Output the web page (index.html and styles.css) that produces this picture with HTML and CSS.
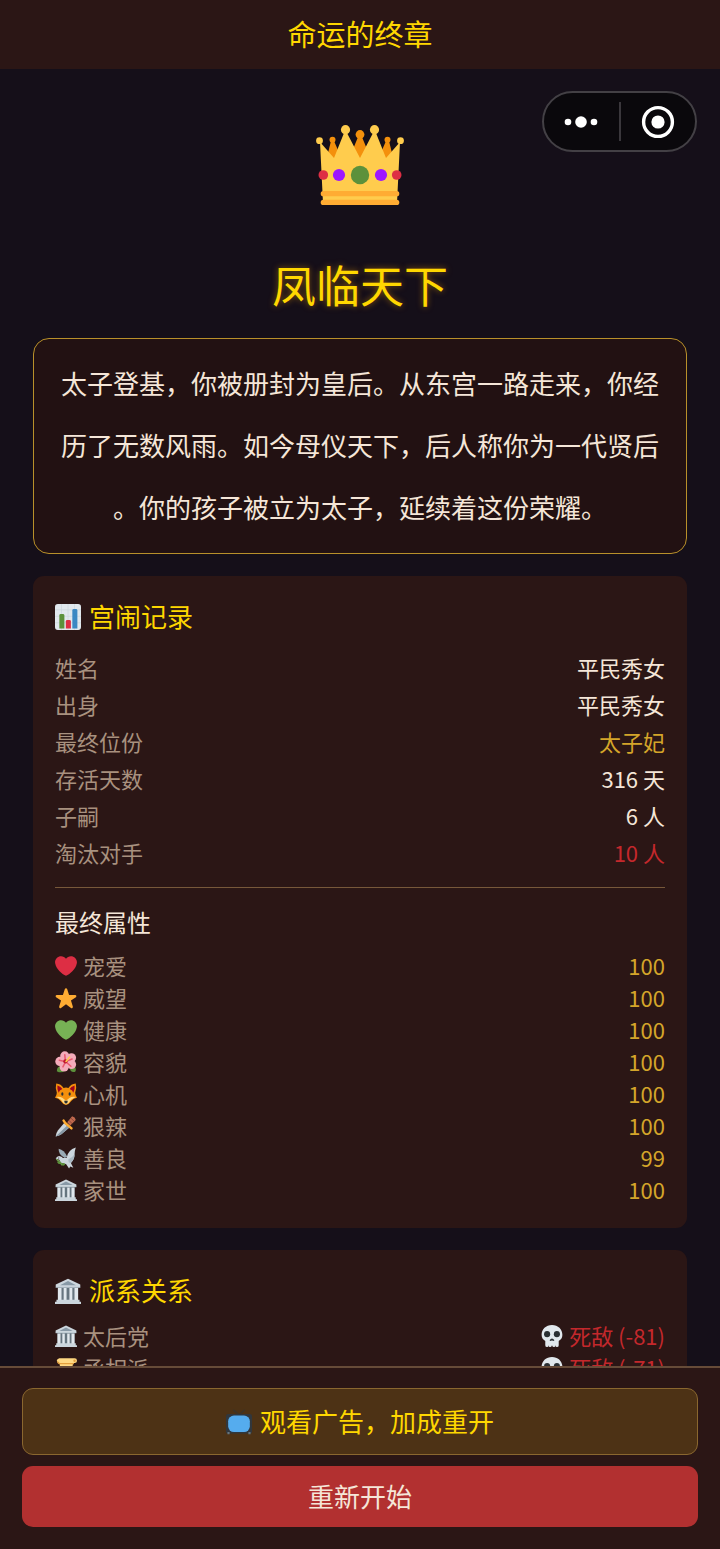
FILE: index.html
```html
<!DOCTYPE html>
<html lang="zh-CN">

<head>
    <meta charset="UTF-8">
    <meta name="viewport" content="width=device-width, initial-scale=1.0">
    <title>命运的终章</title>
    <link rel="stylesheet" href="styles.css">
</head>

<body>
    <!-- icon sprite -->
    <svg class="sprite" aria-hidden="true">
        <symbol id="chart" viewBox="0 0 36 36">
            <rect width="36" height="36" rx="4" fill="#e1e8ed" />
            <path d="M0 8h36M0 17h36M0 26h36M9 0v36M18 0v36M27 0v36" stroke="#ccd6dd" stroke-width="1" fill="none" />
            <path d="M6 34V16q0-2 2-2h3q2 0 2 2v18z" fill="#5c913b" />
            <path d="M15 34V24q0-2 2-2h3q2 0 2 2v10z" fill="#dd2e44" />
            <path d="M24 34V9q0-2 2-2h3q2 0 2 2v25z" fill="#3b88c3" />
        </symbol>
        <symbol id="heart" viewBox="0 0 36 36">
            <path fill="currentColor" d="M35.885 11.833c0-5.45-4.418-9.868-9.867-9.868-3.308 0-6.227 1.633-8.018 4.129-1.791-2.496-4.71-4.129-8.017-4.129-5.45 0-9.868 4.417-9.868 9.868 0 .772.098 1.52.266 2.241C1.751 22.587 11.216 31.568 18 34.034c6.783-2.466 16.249-11.447 17.617-19.959.17-.721.268-1.469.268-2.242z" />
        </symbol>
        <symbol id="star" viewBox="0 0 36 36">
            <path fill="#ffac33" d="M27.287 34.627c-.404 0-.806-.124-1.152-.371L18 28.422l-8.135 5.834a1.97 1.97 0 0 1-2.312-.008 1.971 1.971 0 0 1-.721-2.194l3.034-9.792-8.062-5.681a1.98 1.98 0 0 1-.708-2.203 1.978 1.978 0 0 1 1.866-1.363L12.947 13l3.179-9.549a1.976 1.976 0 0 1 3.749 0L23 13l10.036.015a1.975 1.975 0 0 1 1.159 3.566l-8.062 5.681 3.034 9.792a1.97 1.97 0 0 1-.72 2.194 1.957 1.957 0 0 1-1.16.379z" />
        </symbol>
        <symbol id="flower" viewBox="0 0 36 36">
            <path d="M10 25Q3 25 3 33q9 5 15-3zM24 27q1 9 9 7 3-5-2-11z" fill="#5c913b" />
            <g fill="#f4abba">
                <circle cx="16" cy="8" r="7.500" />
                <circle cx="27" cy="11" r="7.500" />
                <circle cx="27" cy="22" r="7.500" />
                <circle cx="15" cy="26" r="7.500" />
                <circle cx="8" cy="17" r="7.500" />
                <circle cx="18" cy="17" r="8" />
            </g>
            <path d="M17 17 16 6M18 17l10-4M18 18l8 7M17 18l-4 8M16 17 7 15" stroke="#ea596e" stroke-width="2.500" stroke-linecap="round" />
            <circle cx="17" cy="17" r="3.500" fill="#be1931" />
            <path d="M18 17l6-7" stroke="#ffcc4d" stroke-width="2.500" stroke-linecap="round" />
        </symbol>
        <symbol id="fox" viewBox="0 0 36 36">
            <path d="M2 1q8 1 12 7 4-1 8 0 4-6 12-7 2 8-1 15 0 4 3 8-6 1-9 5-4 6-9 7-5-1-9-7-3-4-9-5 3-4 3-8Q0 9 2 1z" fill="#f4900c" />
            <path d="M4 4q6 2 8 6-5 2-6 6Q3 11 4 4zM32 4q-6 2-8 6 5 2 6 6 3-5 2-12z" fill="#a0041e" />
            <path d="M2 23q6-1 10 1l6 5 6-5q4-2 10-1-5 2-8 5-3 6-8 7-5-1-8-7-3-3-8-5z" fill="#ffd983" />
            <ellipse cx="12" cy="18" rx="1.800" ry="2.800" fill="#292f33" />
            <ellipse cx="24" cy="18" rx="1.800" ry="2.800" fill="#292f33" />
            <path d="M15 29h6q0 4-3 5-3-1-3-5z" fill="#292f33" />
        </symbol>
        <symbol id="dagger" viewBox="0 0 36 36">
            <path d="M15 13 5 25Q2 29 1 35q6-1 10-4l12-10z" fill="#ccd6dd" />
            <path d="M20 17 1 35q6-1 10-4l12-10z" fill="#8899a6" />
            <path d="m20 12 8-10q5 1 6 6l-9 9z" fill="#c1694f" />
            <path d="m23 9 5 5M26 5l5 5" stroke="#8a4633" stroke-width="1.500" />
            <path d="M14 9q2 4 6 7t7 6" stroke="#ffac33" stroke-width="4" stroke-linecap="round" fill="none" />
        </symbol>
        <symbol id="dove" viewBox="0 0 36 36">
            <path d="M16 18Q5 12 6 3q9 2 14 13z" fill="#99aab5" />
            <path d="M19 18Q21 5 34 1q-2 6-2 11 0 9-6 14l4 8-5-2-2 3-5-7q-9 0-11-7l-6-2q3-5 7-4 3 0 5 3z" fill="#ccd6dd" />
            <path d="M22 20q7-3 10-8 0 9-6 14-5 0-4-6z" fill="#aab8c2" />
            <circle cx="6" cy="18" r="1" fill="#292f33" />
            <path d="M2 20q5 2 10 10" stroke="#77b255" stroke-width="2" fill="none" />
            <path d="M3 24q6-2 8 4-6 1-8-4zM10 28q4-4 7 0-3 5-7 0z" fill="#5c913b" />
        </symbol>
        <symbol id="temple" viewBox="0 0 36 36">
            <path d="M4 12h28v20H4z" fill="#66757f" />
            <path d="M18 1 1 9v4h34V9z" fill="#ccd6dd" />
            <path d="M18 4 7 10h22z" fill="#8899a6" />
            <path d="M4 14h5v17H4zM12 14h4v17h-4zM20 14h4v17h-4zM27 14h5v17h-5z" fill="#e1e8ed" />
            <path d="M2 30h32v3h2v3H0v-3h2z" fill="#ccd6dd" />
            <path d="M1 13h34" stroke="#aab8c2" />
        </symbol>
        <symbol id="scroll" viewBox="0 0 36 36">
            <path d="M7 5h25q-4 6-3 14l2 13H11q-4-8-3-17z" fill="#ffd983" />
            <path d="M7 2h25q4 0 4 4t-4 4H7q-4-1-4-4t4-4z" fill="#ffd983" />
            <path d="M4 7q1 4 5 4h22" stroke="#e39f3d" stroke-width="2" fill="none" />
            <circle cx="32" cy="6" r="2" fill="#e39f3d" />
            <path d="M11 16h14M11 21h15M12 26h14" stroke="#c1694f" />
            <path d="M5 28h24q4 0 4 3t-4 4H5q-4-1-4-4t4-3z" fill="#ffe8b6" />
        </symbol>
        <symbol id="skull" viewBox="0 0 36 36">
            <path d="M18 0C8 0 1 7 1 16q0 7 6 10v7q0 3 3 3 2 0 2-3 0 3 3 3 2 0 3-3 1 3 3 3 3 0 3-3 0 3 2 3 3 0 3-3v-7q6-3 6-10C35 7 28 0 18 0z" fill="#e1e8ed" />
            <circle cx="10" cy="15" r="5" fill="#292f33" />
            <circle cx="26" cy="15" r="5" fill="#292f33" />
            <path d="M14 25q4-6 8 0-2 2-4 0-2 2-4 0z" fill="#292f33" />
        </symbol>
        <symbol id="tv" viewBox="0 0 36 36">
            <path d="m10 1 8 7 8-7" stroke="#3b3429" stroke-width="2" fill="none" />
            <rect y="7" width="36" height="27" rx="3" fill="#31373d" />
            <path d="M2 32h3v3H2zM31 32h3v3h-3z" fill="#66757f" />
            <rect x="3" y="9" width="30" height="23" rx="8" fill="#55acee" />
        </symbol>
    </svg>

    <header class="topbar">命运的终章</header>

    <div class="capsule">
        <button type="button" class="capsule-btn" aria-label="更多">
            <svg width="34" height="12" viewBox="0 0 34 12" fill="#fff">
                <circle cx="4" cy="6" r="3.3" />
                <circle cx="17" cy="6" r="5.8" />
                <circle cx="30" cy="6" r="3.3" />
            </svg>
        </button>
        <button type="button" class="capsule-btn" aria-label="关闭">
            <svg width="34" height="34" viewBox="0 0 34 34">
                <circle cx="17" cy="17" r="14.4" fill="none" stroke="#fff" stroke-width="3.4" />
                <circle cx="17" cy="17" r="6.6" fill="#fff" />
            </svg>
        </button>
    </div>

    <main class="content">
        <section class="ending">
            <svg class="crown" viewBox="0 0 88 81" aria-hidden="true">
                <g fill="#f4900c">
                    <circle cx="16.5" cy="14.7" r="3" />
                    <circle cx="71.5" cy="14.7" r="3" />
                    <circle cx="44" cy="9.5" r="4.4" />
                    <path d="M15 16h3l7 16-7 6-6-10zM70 16h3l3 12-6 10-7-6zM42 12h4l9 22H33z" />
                </g>
                <g fill="#ffcc4d">
                    <circle cx="3.5" cy="15.7" r="3.4" />
                    <circle cx="84.5" cy="15.7" r="3.4" />
                    <circle cx="29.5" cy="4.7" r="4.6" />
                    <circle cx="58.5" cy="4.7" r="4.6" />
                    <path d="M4 17 18 33 28 8h3l13 25L57 8h3l10 25 14-16-3 61H7z" />
                </g>
                <rect x="4.700" y="66" width="78.600" height="5.300" rx="2.600" fill="#ffac33" />
                <rect x="4.700" y="74.700" width="78.600" height="5.300" rx="2.600" fill="#ffac33" />
                <circle cx="7.300" cy="50" r="4.800" fill="#dd2e44" />
                <circle cx="80.700" cy="50" r="4.800" fill="#dd2e44" />
                <circle cx="23" cy="50" r="6.100" fill="#9d16ff" />
                <circle cx="65" cy="50" r="6.100" fill="#9d16ff" />
                <circle cx="44" cy="50" r="9.200" fill="#5c913b" />
            </svg>
            <h1 class="ending-title">凤临天下</h1>
            <p class="story">太子登基，你被册封为皇后。从东宫一路走来，你经历了无数风雨。如今母仪天下，后人称你为一代贤后。你的孩子被立为太子，延续着这份荣耀。</p>
        </section>

        <section class="card">
            <h2 class="card-title"><svg class="icon"><use href="#chart" /></svg>宫闹记录</h2>
            <dl class="records">
                <div class="row"><dt>姓名</dt><dd>平民秀女</dd></div>
                <div class="row"><dt>出身</dt><dd>平民秀女</dd></div>
                <div class="row"><dt>最终位份</dt><dd class="gold">太子妃</dd></div>
                <div class="row"><dt>存活天数</dt><dd>316 天</dd></div>
                <div class="row"><dt>子嗣</dt><dd>6 人</dd></div>
                <div class="row"><dt>淘汰对手</dt><dd class="red">10 人</dd></div>
            </dl>
            <h3 class="sub-title">最终属性</h3>
            <dl class="stats">
                <div class="row"><dt><svg class="icon love"><use href="#heart" /></svg>宠爱</dt><dd class="gold">100</dd></div>
                <div class="row"><dt><svg class="icon"><use href="#star" /></svg>威望</dt><dd class="gold">100</dd></div>
                <div class="row"><dt><svg class="icon health"><use href="#heart" /></svg>健康</dt><dd class="gold">100</dd></div>
                <div class="row"><dt><svg class="icon"><use href="#flower" /></svg>容貌</dt><dd class="gold">100</dd></div>
                <div class="row"><dt><svg class="icon"><use href="#fox" /></svg>心机</dt><dd class="gold">100</dd></div>
                <div class="row"><dt><svg class="icon"><use href="#dagger" /></svg>狠辣</dt><dd class="gold">100</dd></div>
                <div class="row"><dt><svg class="icon"><use href="#dove" /></svg>善良</dt><dd class="gold">99</dd></div>
                <div class="row"><dt><svg class="icon"><use href="#temple" /></svg>家世</dt><dd class="gold">100</dd></div>
            </dl>
        </section>

        <section class="card">
            <h2 class="card-title"><svg class="icon"><use href="#temple" /></svg>派系关系</h2>
            <dl class="stats">
                <div class="row"><dt><svg class="icon"><use href="#temple" /></svg>太后党</dt><dd class="red"><svg class="icon"><use href="#skull" /></svg>死敌 (-81)</dd></div>
                <div class="row"><dt><svg class="icon"><use href="#scroll" /></svg>丞相派</dt><dd class="red"><svg class="icon"><use href="#skull" /></svg>死敌 (-71)</dd></div>
            </dl>
        </section>
    </main>

    <footer class="actions">
        <button type="button" class="btn btn-ad"><svg class="icon"><use href="#tv" /></svg>观看广告，加成重开</button>
        <button type="button" class="btn btn-restart">重新开始</button>
    </footer>
</body>

</html>
```
FILE: styles.css
```css
* {
    box-sizing: border-box;
    margin: 0;
    padding: 0;
}

body {
    display: flex;
    flex-direction: column;
    height: 100vh;
    background-color: #150f19;
    color: #f5e6d8;
    font-family: "Noto Sans CJK SC", sans-serif;
    font-size: 22px;
    line-height: 32px;
}

h1,
h2,
h3 {
    font-weight: 400;
}

.sprite {
    display: none;
}

.topbar {
    flex: none;
    padding: 13px 0 16px;
    background-color: #2b1615;
    color: #ffd700;
    font-size: 29px;
    line-height: 40px;
    text-align: center;
}

/* floating menu in the top right corner */
.capsule {
    position: absolute;
    top: 91px;
    right: 23px;
    display: flex;
    align-items: center;
    width: 155px;
    height: 61px;
    background-color: #0a080c;
    border: 2px solid #434045;
    border-radius: 31px;
}

.capsule-btn {
    display: flex;
    flex: 1;
    align-items: center;
    justify-content: center;
    height: 39px;
    background: none;
    border: none;
}

.capsule-btn + .capsule-btn {
    border-left: 2px solid #3a373c;
}

.content {
    flex: 1;
    min-height: 0;
    padding: 56px 33px 22px;
    overflow-y: auto;
    scrollbar-width: none;
}

.ending {
    text-align: center;
}

.crown {
    display: block;
    width: 88px;
    margin: 0 auto;
}

.ending-title {
    margin: 46px 0 22px;
    color: #ffd700;
    font-size: 44px;
    line-height: 64px;
    text-shadow: 0 0 6px rgba(255, 165, 0, 0.5);
}

.story {
    padding: 13px 26px 15px;
    background-color: #221112;
    border: 1px solid #b8902a;
    border-radius: 16px;
    font-size: 26px;
    line-height: 62px;
    line-break: anywhere;
}

.card {
    margin-top: 22px;
    padding: 22px 22px 23px;
    background-color: #2b1615;
    border-radius: 11px;
}

.card-title {
    display: flex;
    align-items: center;
    gap: 8px;
    margin-bottom: 11px;
    color: #ffd700;
    font-size: 26px;
    line-height: 36px;
}

.icon {
    flex: none;
    width: 1em;
    height: 1em;
    margin-top: 2px;
}

.row,
.row dt,
.row dd {
    display: flex;
    align-items: center;
}

.row {
    justify-content: space-between;
}

.row dt,
.row dd {
    gap: 6px;
}

.row dt {
    color: #a8917f;
}

.records {
    padding: 4px 0 16px;
    border-bottom: 1px solid #77583a;
    line-height: 37px;
}

.sub-title {
    margin: 18px 0 11px;
    font-size: 24px;
}

.row .gold {
    color: #d4a52a;
}

.row .red {
    color: #c4282c;
}

.row .love {
    color: #dd2e44;
}

.row .health {
    color: #77b255;
}

.actions {
    display: flex;
    flex: none;
    flex-direction: column;
    gap: 11px;
    padding: 20px 22px 22px;
    background-color: #2b1615;
    border-top: 2px solid #664b38;
}

.btn {
    display: flex;
    align-items: center;
    justify-content: center;
    gap: 8px;
    padding-bottom: 2px;
    border: none;
    border-radius: 11px;
    font-family: inherit;
    font-size: 26px;
    line-height: 59px;
}

.btn-ad {
    padding: 2px 0 4px;
    background-color: #4d3215;
    border: 1px solid #8a672f;
    color: #ffd700;
}

.btn-restart {
    background-color: #b23030;
    color: #f5e6d8;
}
```
